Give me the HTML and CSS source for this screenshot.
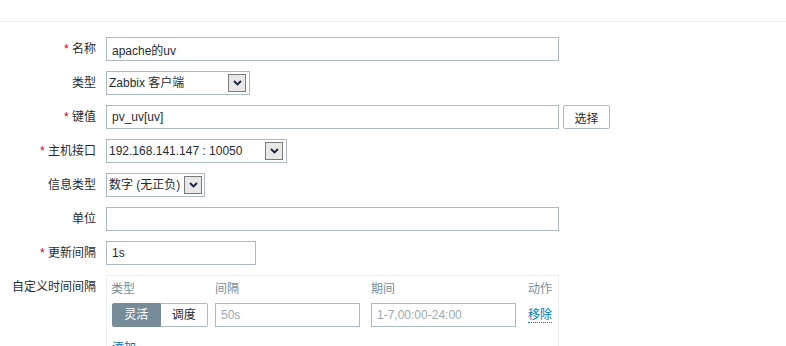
FILE: index.html
```html
<!DOCTYPE html>
<html lang="zh-CN">
<head>
    <meta charset="UTF-8">
    <title>监控项</title>
    <link rel="stylesheet" href="styles.css">
</head>
<body>
    <div class="tabs-bar"></div>

    <form class="item-form">
        <ul class="form-list">
            <li class="form-row">
                <label class="form-label required">名称</label>
                <div class="form-field"><input type="text" class="text-input wide" value="apache的uv"></div>
            </li>
            <li class="form-row">
                <label class="form-label">类型</label>
                <div class="form-field">
                    <div class="select-box type-select">
                        <span>Zabbix 客户端</span>
                        <span class="select-btn"><svg width="9" height="6" viewBox="0 0 9 6"><path d="M1 1 L4.5 4.5 L8 1" fill="none" stroke="#1b2040" stroke-width="1.8"/></svg></span>
                    </div>
                </div>
            </li>
            <li class="form-row">
                <label class="form-label required">键值</label>
                <div class="form-field">
                    <input type="text" class="text-input wide" value="pv_uv[uv]">
                    <button type="button" class="btn-alt">选择</button>
                </div>
            </li>
            <li class="form-row">
                <label class="form-label required">主机接口</label>
                <div class="form-field">
                    <div class="select-box iface-select">
                        <span>192.168.141.147 : 10050</span>
                        <span class="select-btn"><svg width="9" height="6" viewBox="0 0 9 6"><path d="M1 1 L4.5 4.5 L8 1" fill="none" stroke="#1b2040" stroke-width="1.8"/></svg></span>
                    </div>
                </div>
            </li>
            <li class="form-row">
                <label class="form-label">信息类型</label>
                <div class="form-field">
                    <div class="select-box info-select">
                        <span>数字 (无正负)</span>
                        <span class="select-btn"><svg width="9" height="6" viewBox="0 0 9 6"><path d="M1 1 L4.5 4.5 L8 1" fill="none" stroke="#1b2040" stroke-width="1.8"/></svg></span>
                    </div>
                </div>
            </li>
            <li class="form-row">
                <label class="form-label">单位</label>
                <div class="form-field"><input type="text" class="text-input wide" value=""></div>
            </li>
            <li class="form-row">
                <label class="form-label required">更新间隔</label>
                <div class="form-field"><input type="text" class="text-input short" value="1s"></div>
            </li>
            <li class="form-row">
                <label class="form-label">自定义时间间隔</label>
                <div class="form-field">
                    <div class="interval-box">
                        <div class="interval-grid">
                            <div class="col-head">类型</div>
                            <div class="col-head">间隔</div>
                            <div class="col-head">期间</div>
                            <div class="col-head">动作</div>

                            <div class="radio-seg">
                                <span class="seg on">灵活</span>
                                <span class="seg">调度</span>
                            </div>
                            <div><input type="text" class="text-input cell" placeholder="50s"></div>
                            <div><input type="text" class="text-input cell" placeholder="1-7,00:00-24:00"></div>
                            <div><a href="#" class="link-action">移除</a></div>
                        </div>
                        <div class="add-row"><a href="#" class="link-action">添加</a></div>
                    </div>
                </div>
            </li>
        </ul>
    </form>
</body>
</html>
```

FILE: styles.css
```css
* {
    margin: 0;
    padding: 0;
    box-sizing: border-box;
}

body {
    background-color: #fff;
    color: #1f2c33;
    font-family: Arial, "Liberation Sans", "Noto Sans CJK SC", sans-serif;
    font-size: 12px;
    line-height: 14px;
    overflow: hidden;
}

.tabs-bar {
    height: 22px;
    border-bottom: 1px solid #ebebeb;
}

.item-form {
    padding-top: 15px;
}

.form-list {
    list-style: none;
    display: flex;
    flex-direction: column;
    gap: 10px;
}

.form-row {
    display: flex;
    align-items: flex-start;
    gap: 10px;
}

.form-label {
    width: 96px;
    flex-shrink: 0;
    text-align: right;
    line-height: 24px;
}

.form-label.required::before {
    content: "* ";
    color: #d40000;
}

.form-field {
    display: flex;
    align-items: center;
    gap: 4px;
}

.text-input {
    height: 24px;
    border: 1px solid #acbbc2;
    padding: 0 5px;
    font-family: inherit;
    font-size: 12px;
    color: #1f2c33;
    background-color: #fff;
    outline: none;
}

.text-input::placeholder {
    color: #9aa9b0;
}

.text-input.wide {
    width: 453px;
}

.text-input.short {
    width: 150px;
}

.text-input.cell {
    width: 145px;
}

.select-box {
    height: 24px;
    border: 1px solid #acbbc2;
    display: flex;
    align-items: center;
    justify-content: space-between;
    padding: 0 3px 0 2px;
    white-space: nowrap;
}

.type-select {
    width: 144px;
}

.iface-select {
    width: 181px;
}

.info-select {
    width: 99px;
    padding-right: 2px;
}

.select-btn {
    width: 18px;
    height: 18px;
    border: 1px solid #7a7a7a;
    background-color: #e8e8e8;
    display: flex;
    align-items: center;
    justify-content: center;
    flex-shrink: 0;
}

.btn-alt {
    height: 24px;
    width: 47px;
    border: 1px solid #acbbc2;
    border-radius: 2px;
    background-color: #fff;
    color: #1f2c33;
    font-family: inherit;
    font-size: 12px;
}

.interval-box {
    width: 453px;
    height: 80px;
    border: 1px solid #ebeef0;
    border-bottom: none;
    padding: 1px 0 0 4px;
}

.interval-grid {
    display: grid;
    grid-template-columns: 104px 156px 157px auto;
    row-gap: 2px;
}

.col-head {
    color: #768d99;
    line-height: 24px;
}

.radio-seg {
    display: flex;
    width: 96px;
    height: 24px;
    margin-left: 1px;
}

.seg {
    flex: 1;
    display: flex;
    align-items: center;
    justify-content: center;
    border: 1px solid #acbbc2;
    background-color: #fff;
}

.seg:first-child {
    border-radius: 2px 0 0 2px;
}

.seg:last-child {
    border-left: none;
    border-radius: 0 2px 2px 0;
}

.seg.on {
    background-color: #768d99;
    border-color: #768d99;
    color: #fff;
}

.link-action {
    color: #0275b8;
    text-decoration: none;
    border-bottom: 1px dotted #0275b8;
    line-height: 24px;
}

.add-row {
    margin-top: 9px;
    line-height: 24px;
    padding-left: 1px;
}
```
